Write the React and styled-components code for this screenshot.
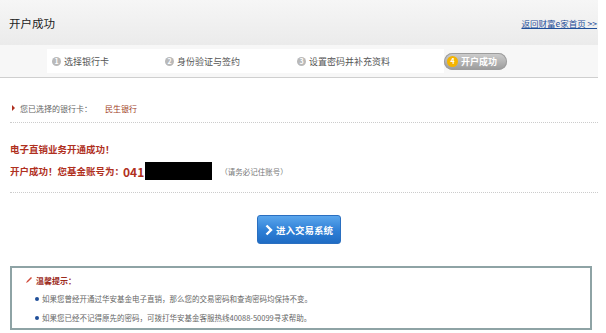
import styled, { createGlobalStyle } from 'styled-components';

const Global = createGlobalStyle`
    body {
        margin: 0;
        background: #ffffff;
        font-family: "Noto Sans CJK SC", "Liberation Sans", sans-serif;
    }
`

const Page = styled.div`
    width: 598px;
    height: 333px;
    background: #ffffff;
`

const Header = styled.div`
    height: 45px;
    display: flex;
    align-items: center;
    justify-content: space-between;
    padding: 0 1px 0 9px;
    box-sizing: border-box;
    background: linear-gradient(180deg, #f6f6f6 0%, #ebebeb 100%);
`

const PageTitle = styled.h1`
    margin: 0;
    font-size: 11.5px;
    font-weight: normal;
    color: #222222;
`

const BackLink = styled.a`
    font-size: 8.5px;
    color: #1f4f99;
    text-decoration: underline;
    white-space: pre;
    cursor: pointer;
`

const StepBar = styled.div`
    height: 33px;
    display: flex;
    align-items: center;
    padding-left: 47px;
    box-sizing: border-box;
    background: #f7f7f7;
    border-bottom: 1px solid #cfcfcf;
`

const Step = styled.div`
    width: ${p => p.$w}px;
    height: 24px;
    display: flex;
    align-items: center;
    gap: 3px;
    padding-left: 5px;
    box-sizing: border-box;
    background: #ffffff;
    font-size: 9px;
    color: #555555;
`

const StepNum = styled.span`
    width: 9px;
    height: 9px;
    border-radius: 50%;
    background: #b9b9b9;
    color: #ffffff;
    font-size: 7px;
    line-height: 9px;
    text-align: center;
    font-weight: bold;
`

const CurrentStep = styled.div`
    height: 17px;
    display: flex;
    align-items: center;
    gap: 3px;
    padding: 0 10px 0 3px;
    border-radius: 9px;
    background: linear-gradient(180deg, #cfcfcf 0%, #9a9a9a 100%);
    box-shadow: inset 0 0 0 1px #9d9d9d;
    color: #ffffff;
    font-size: 9px;
    font-weight: bold;
`

const CurrentNum = styled(StepNum)`
    width: 11px;
    height: 11px;
    line-height: 11px;
    background: #f4b400;
`

const Content = styled.div`
    padding-left: 10px;
`

const BankRow = styled.div`
    height: 45px;
    display: flex;
    align-items: center;
    padding-top: 16px;
    font-size: 8px;
    color: #666666;
    border-bottom: 1px dotted #cccccc;
    box-sizing: border-box;
`

const Arrow = styled.span`
    width: 0;
    height: 0;
    border-top: 3px solid transparent;
    border-bottom: 3px solid transparent;
    border-left: 3px solid #b03020;
    margin: 0 5px 0 2px;
`

const BankName = styled.span`
    margin-left: 13px;
    color: #a0401e;
`

const Result = styled.div`
    height: 70px;
    padding-top: 15px;
    box-sizing: border-box;
    border-bottom: 1px dotted #cccccc;
`

const ResultLine = styled.div`
    display: flex;
    align-items: center;
    height: 22px;
    font-size: 9.5px;
    font-weight: bold;
    color: #b0301e;
`

const AccountNo = styled.span`
    font-size: 12px;
    margin-left: -1px;
`

const Masked = styled.span`
    width: 67px;
    height: 18px;
    background: #000000;
    margin: 0 8px 0 1px;
`

const Note = styled.span`
    font-size: 7.5px;
    font-weight: normal;
    color: #777777;
`

const ButtonRow = styled.div`
    display: flex;
    justify-content: center;
    padding: 22px 10px 22px 0;
`

const EnterButton = styled.button`
    width: 84px;
    height: 29px;
    display: flex;
    align-items: center;
    justify-content: center;
    gap: 3px;
    border: 1px solid #2a6fc0;
    border-radius: 3px;
    background: linear-gradient(180deg, #5aa6ec 0%, #2e7fd6 55%, #1f6cc4 100%);
    color: #ffffff;
    font-family: inherit;
    font-size: 9.5px;
    font-weight: bold;
    padding: 0;
    cursor: pointer;
`

const TipBox = styled.div`
    width: 582px;
    height: 64px;
    box-sizing: border-box;
    border: 2px solid #8ea3a5;
    padding: 6px 0 0 13px;
`

const TipTitle = styled.div`
    display: flex;
    align-items: center;
    gap: 3px;
    font-size: 8px;
    font-weight: bold;
    color: #9c2a1c;
    height: 12px;
`

const TipList = styled.ul`
    list-style: none;
    margin: 3px 0 0 0;
    padding: 0 0 0 10px;
`

const TipItem = styled.li`
    display: flex;
    align-items: center;
    gap: 3px;
    height: 19px;
    font-size: 7.5px;
    color: #666666;
    &::before {
        content: '';
        width: 4px;
        height: 4px;
        border-radius: 50%;
        background: #1f4f99;
    }
`

const steps = [
    { n: 1, text: '选择银行卡', w: 113 },
    { n: 2, text: '身份验证与签约', w: 132 },
    { n: 3, text: '设置密码并补充资料', w: 152 },
]

function App() {
    return (
        <>
            <Global />
            <Page>
                <Header>
                    <PageTitle>开户成功</PageTitle>
                    <BackLink>{'返回财富e家首页 >>'}</BackLink>
                </Header>

                <StepBar>
                    {steps.map(s => (
                        <Step key={s.n} $w={s.w}>
                            <StepNum>{s.n}</StepNum>
                            {s.text}
                        </Step>
                    ))}
                    <CurrentStep>
                        <CurrentNum>4</CurrentNum>
                        开户成功
                    </CurrentStep>
                </StepBar>

                <Content>
                    <BankRow>
                        <Arrow />
                        您已选择的银行卡：
                        <BankName>民生银行</BankName>
                    </BankRow>

                    <Result>
                        <ResultLine>电子直销业务开通成功！</ResultLine>
                        <ResultLine>
                            开户成功！您基金账号为：
                            <AccountNo>041</AccountNo>
                            <Masked />
                            <Note>（请务必记住账号）</Note>
                        </ResultLine>
                    </Result>

                    <ButtonRow>
                        <EnterButton>
                            <svg width="8" height="12" viewBox="0 0 8 12">
                                <path d="M1.5 1.5 L6 6 L1.5 10.5" fill="none" stroke="#ffffff" strokeWidth="2.4" />
                            </svg>
                            进入交易系统
                        </EnterButton>
                    </ButtonRow>

                    <TipBox>
                        <TipTitle>
                            <svg width="8" height="8" viewBox="0 0 8 8">
                                <path d="M1 7 L2 5 L6 1 L7 2 L3 6 Z" fill="#d04a3a" />
                            </svg>
                            温馨提示：
                        </TipTitle>
                        <TipList>
                            <TipItem>如果您曾经开通过华安基金电子直销，那么您的交易密码和查询密码均保持不变。</TipItem>
                            <TipItem>如果您已经不记得原先的密码，可拨打华安基金客服热线40088-50099寻求帮助。</TipItem>
                        </TipList>
                    </TipBox>
                </Content>
            </Page>
        </>
    );
}
export default App;
